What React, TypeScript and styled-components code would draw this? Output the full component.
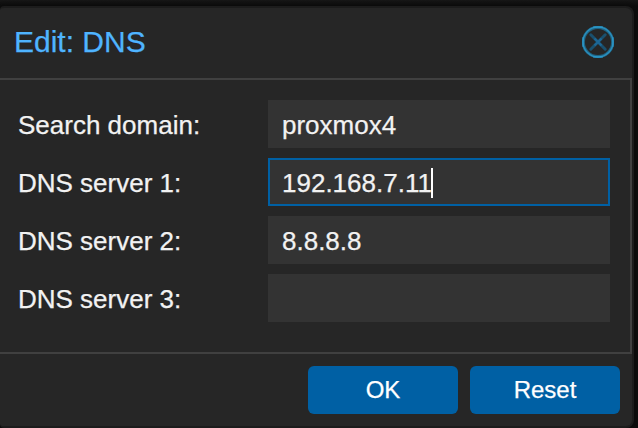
import styled, { createGlobalStyle } from "styled-components";

const GlobalStyle = createGlobalStyle`
  html, body {
    margin: 0;
    overflow: hidden;
    background: #0e0e0e;
  }
  * { box-sizing: border-box; }
  body, input, button {
    font-family: "Liberation Sans", Arial, Helvetica, sans-serif;
    -webkit-text-stroke: 0.25px currentColor;
  }
`;

const Backdrop = styled.main`
  width: 638px;
  height: 428px;
  padding-top: 6px;
  overflow: hidden;
  background: linear-gradient(#171717, #0d0d0d 6px);
`;

const Window = styled.section`
  display: flex;
  flex-direction: column;
  width: 634px;
  height: 422px;
  border: 2px solid #1c1c1c;
  border-left: 0;
  border-radius: 4px 8px 8px 4px;
  background: #262626;
  box-shadow: 0 0 6px #0b0b0b;
`;

const Header = styled.header`
  display: flex;
  align-items: center;
  justify-content: space-between;
  height: 70px;
  padding: 0 18px 2px 14px;
`;

const Title = styled.h1`
  margin: 0;
  color: #4fb4ff;
  font-size: 30px;
  font-weight: 400;
  line-height: 36px;
`;

const CloseButton = styled.button`
  display: flex;
  padding: 0;
  border: 0;
  background: none;
`;

const Body = styled.div`
  display: flex;
  flex-direction: column;
  gap: 10px;
  height: 276px;
  padding: 20px 20px 0 18px;
  border: solid #404040;
  border-width: 2px 2px 2px 0;
`;

const Row = styled.label`
  display: grid;
  grid-template-columns: 250px 342px;
  align-items: center;
  height: 48px;
  color: #f2f2f2;
  font-size: 26px;
  line-height: 30px;
`;

const Caption = styled.span`
  padding-top: 2px;
`;

const Field = styled.span<{ $active?: boolean }>`
  display: flex;
  align-items: center;
  height: 48px;
  padding: 2px 12px 0;
  border: 2px solid ${(p) => (p.$active ? "#0060a4" : "#333333")};
  background: #333333;
`;

const Caret = styled.span`
  width: 2px;
  height: 30px;
  margin-left: -1px;
  background: #ffffff;
`;

const Footer = styled.footer`
  display: flex;
  justify-content: flex-end;
  gap: 12px;
  padding: 12px 12px 0;
`;

const Button = styled.button`
  width: 150px;
  height: 48px;
  padding: 0;
  border: 0;
  border-radius: 6px;
  background: #0060a4;
  color: #ffffff;
  font-size: 24px;
  line-height: 28px;
`;

const fields = [
  { label: "Search domain:", value: "proxmox4" },
  { label: "DNS server 1:", value: "192.168.7.11", active: true },
  { label: "DNS server 2:", value: "8.8.8.8" },
  { label: "DNS server 3:", value: "" },
];

export default function App() {
  return (
    <>
      <GlobalStyle />
      <Backdrop>
        <Window>
          <Header>
            <Title>Edit: DNS</Title>
            <CloseButton aria-label="Close">
              <svg width="32" height="32" viewBox="0 0 32 32" fill="none">
                <circle cx="16" cy="16" r="14.7" stroke="#1f6484" strokeWidth="3.2" />
                <circle cx="16" cy="16" r="15" stroke="#2a8ebc" strokeWidth="1.4" />
                <path d="M11 1h10M11 31h10M1 11v10M31 11v10" stroke="#2fa3d6" strokeWidth="1.4" strokeOpacity=".55" />
                <path d="M8.8 8.8 23.2 23.2M23.2 8.8 8.8 23.2" stroke="#1a506e" strokeWidth="3" strokeLinecap="round" />
                <path d="m12.5 12.5 7 7m0-7-7 7" stroke="#1c6796" strokeWidth="2.2" />
              </svg>
            </CloseButton>
          </Header>
          <Body>
            {fields.map((f) => (
              <Row key={f.label}>
                <Caption>{f.label}</Caption>
                <Field $active={f.active}>
                  {f.value}
                  {f.active && <Caret />}
                </Field>
              </Row>
            ))}
          </Body>
          <Footer>
            <Button>OK</Button>
            <Button>Reset</Button>
          </Footer>
        </Window>
      </Backdrop>
    </>
  );
}
